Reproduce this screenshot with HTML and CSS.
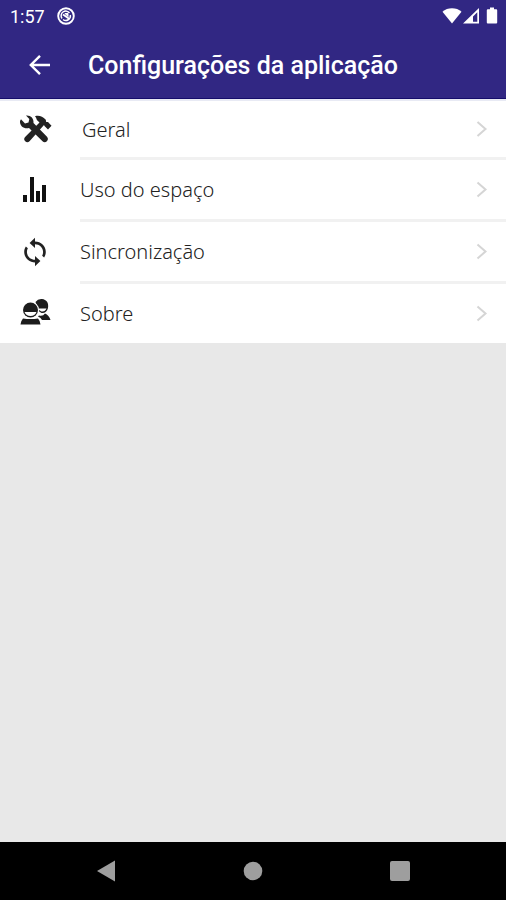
FILE: index.html
```
<!DOCTYPE html>
<html lang="pt">

<head>
    <meta charset="UTF-8">
    <meta name="viewport" content="width=device-width, initial-scale=1.0">
    <title>Configurações da aplicação</title>
    <link rel="stylesheet" href="styles.css">
</head>

<body>
    <header class="header">
        <div class="status-bar">
            <span class="time">1:57</span>
            <svg class="status-app" width="18" height="18" viewBox="0 0 18 18" fill="none" stroke="currentColor">
                <circle cx="9" cy="9" r="7.8" stroke-width="1.9" />
                <path d="M5 11.500A4.600 4.600 0 0 1 12.500 6M6 12.500A4.600 4.600 0 0 0 13.300 8" stroke-width="1.500" />
                <path d="M6 7.500 12.500 12" stroke-width="1.8" />
                <path d="M8 6.500h3v3z" fill="currentColor" />
            </svg>
            <div class="status-icons">
                <svg width="20" height="18" viewBox="0 0 20 18" fill="currentColor">
                    <path d="M.5 4.8C5.500 .2 14.500 .2 19.500 4.800L10 16.500z" />
                </svg>
                <svg width="18" height="18" viewBox="0 0 18 18" fill="currentColor">
                    <path fill-rule="evenodd" d="M1 16.500 17 1v15.500zM11 9.500v5.200h4.300V5.300z" />
                </svg>
                <svg class="battery" width="12" height="18" viewBox="0 0 12 18" fill="currentColor">
                    <path d="M4 .5h4v1.700h2.200q1 0 1 1v12.300q0 1-1 1H1.800q-1 0-1-1V3.200q0-1 1-1H4z" />
                </svg>
            </div>
        </div>
        <div class="app-bar">
            <button class="back" type="button" aria-label="Voltar">
                <svg width="22" height="22" viewBox="0 0 22 22" fill="none" stroke="currentColor" stroke-width="2.400">
                    <path d="M22 11H3M12 1.800 2.800 11l9.200 9.200" />
                </svg>
            </button>
            <h1 class="title">Configurações da aplicação</h1>
        </div>
    </header>

    <main class="content">
        <nav class="menu">
            <a class="item" href="#geral">
                <svg class="icon" width="34" height="32" viewBox="0 0 34 32" fill="#222">
                    <path d="M8 1.500C12.500 1 16 4.200 15.500 9L29 22.800q1.900 2.300-.1 4.400-2.200 2-4.400 0L11 14C6.500 15.200 1.600 12.500 2 7L3 5.300 7 9.400 10.500 8.600 11.300 5z" />
                    <path d="M11.500 27.300q-2.200 1.900-4.300-.1-2-2.200-.1-4.300L21.500 8.500 18.900 6Q18.200 3.400 17 2.200C21 1 24.500 2.400 27.800 5.700L28.200 8 30 8 33.500 11.800 30 15.500 26.500 12.100 26 11z" />
                </svg>
                <span class="label label-first">Geral</span>
                <svg class="arrow" width="12" height="18" viewBox="0 0 12 18">
                    <path d="M1.500 2 9.500 9 1.500 16" />
                </svg>
            </a>
            <a class="item" href="#espaco">
                <svg class="icon" width="34" height="32" viewBox="0 0 34 32" fill="#111">
                    <path d="M5 21h4v7H5zM12 3h4v25h-4zM18 17h4v11h-4zM24 11h4v17h-4z" />
                </svg>
                <span class="label">Uso do espaço</span>
                <svg class="arrow" width="12" height="18" viewBox="0 0 12 18">
                    <path d="M1.500 2 9.500 9 1.500 16" />
                </svg>
            </a>
            <a class="item" href="#sincronizacao">
                <svg class="icon" width="34" height="32" viewBox="0 0 34 32" fill="#222">
                    <path transform="translate(.8 .4) scale(1.35 1.3)" d="M12 4V1L8 5l4 4V6c3.310 0 6 2.690 6 6 0 1.010-.250 1.970-.700 2.800l1.460 1.460C19.540 15.030 20 13.570 20 12c0-4.420-3.580-8-8-8zM12 18c-3.310 0-6-2.690-6-6 0-1.010.250-1.970.700-2.800L5.240 7.740C4.460 8.970 4 10.430 4 12c0 4.420 3.580 8 8 8v3l4-4-4-4z" />
                </svg>
                <span class="label">Sincronização</span>
                <svg class="arrow" width="12" height="18" viewBox="0 0 12 18">
                    <path d="M1.500 2 9.500 9 1.500 16" />
                </svg>
            </a>
            <a class="item" href="#sobre">
                <svg class="icon" width="34" height="32" viewBox="0 0 34 32" fill="#1c1c1c">
                    <path d="M17.500 5Q20 1.500 24 2C28.500 2.500 31 6 30 11 29 15 26.500 16.500 23.500 16L20.500 14z" />
                    <path d="M21 11.500 28.500 11.500Q27 15 23.500 14.500L21 13z" fill="#fff" />
                    <path d="M21 18.500Q25 19.500 27 16.500 31 18 32.500 23H24Q23 20.500 20 19.500z" />
                    <circle cx="12.500" cy="13" r="8.600" fill="#fff" />
                    <circle cx="12.500" cy="13" r="7.500" />
                    <path d="M6.500 15h12Q17 19 12.500 19T6.500 15z" fill="#fff" />
                    <path d="M5 21.500Q12.500 22.500 20 21.500 22 23.500 22.500 27.500h-20Q3 23.500 5 21.500z" />
                </svg>
                <span class="label">Sobre</span>
                <svg class="arrow" width="12" height="18" viewBox="0 0 12 18">
                    <path d="M1.500 2 9.500 9 1.500 16" />
                </svg>
            </a>
        </nav>
    </main>

    <footer class="nav-bar">
        <button type="button" aria-label="Anterior">
            <svg width="22" height="22" viewBox="0 0 22 22">
                <path d="M2 11 20 .5v21z" />
            </svg>
        </button>
        <button type="button" aria-label="Início">
            <svg width="22" height="22" viewBox="0 0 22 22">
                <circle cx="11" cy="11" r="9.300" />
            </svg>
        </button>
        <button type="button" aria-label="Recentes">
            <svg width="22" height="22" viewBox="0 0 22 22">
                <rect x="1" y="1" width="20" height="20" rx="2" />
            </svg>
        </button>
    </footer>
</body>

</html>
```

FILE: styles.css
```
* {
    box-sizing: border-box;
}

body {
    margin: 0;
    min-height: 100vh;
    display: flex;
    flex-direction: column;
    background-color: #e8e8e8;
    font-family: "Noto Sans", sans-serif;
}

svg {
    display: block;
    flex: none;
}

button {
    padding: 0;
    border: none;
    background: none;
    color: inherit;
    cursor: pointer;
}

.header {
    background-color: #312783;
    border-bottom: 1px solid #150d6b;
    color: #fff;
    font-family: Roboto, sans-serif;
}

.status-bar {
    display: flex;
    align-items: center;
    height: 32px;
    padding: 0 8px 0 10px;
}

.time {
    font-size: 18px;
}

.status-app {
    margin-left: 12px;
}

.status-icons {
    display: flex;
    margin-left: auto;
}

.battery {
    margin-left: 6px;
}

.app-bar {
    display: flex;
    align-items: center;
    height: 66px;
    padding: 0 28px;
}

.title {
    margin: 0 0 0 38px;
    font-size: 25px;
    font-weight: 500;
}

.content {
    flex: 1;
}

.menu {
    background-color: #fff;
    border-top: 2px solid #e8eaf4;
}

.item {
    display: flex;
    align-items: center;
    height: 62px;
    padding-left: 18px;
    color: #222;
    text-decoration: none;
}

.item:first-child,
.item:last-child {
    height: 59px;
}

.icon {
    margin-right: 28px;
    margin-bottom: 2px;
}

/* the divider starts at the label, not under the icon */
.label {
    flex: 1;
    align-self: stretch;
    display: flex;
    align-items: center;
    font-size: 20px;
    font-weight: 300;
    border-bottom: 3px solid #f1f1f1;
}

.label-first {
    padding-left: 2px;
}

.arrow {
    align-self: stretch;
    box-sizing: content-box;
    width: 12px;
    height: auto;
    padding-right: 18px;
    border-bottom: 3px solid #f1f1f1;
    fill: none;
    stroke: #d5d5d5;
    stroke-width: 2;
}

.item:last-child .label,
.item:last-child .arrow {
    border-bottom: none;
}

.nav-bar {
    display: flex;
    justify-content: space-around;
    align-items: center;
    height: 58px;
    padding: 0 32px;
    background-color: #000;
}

.nav-bar svg {
    fill: #9e9e9e;
}
```
